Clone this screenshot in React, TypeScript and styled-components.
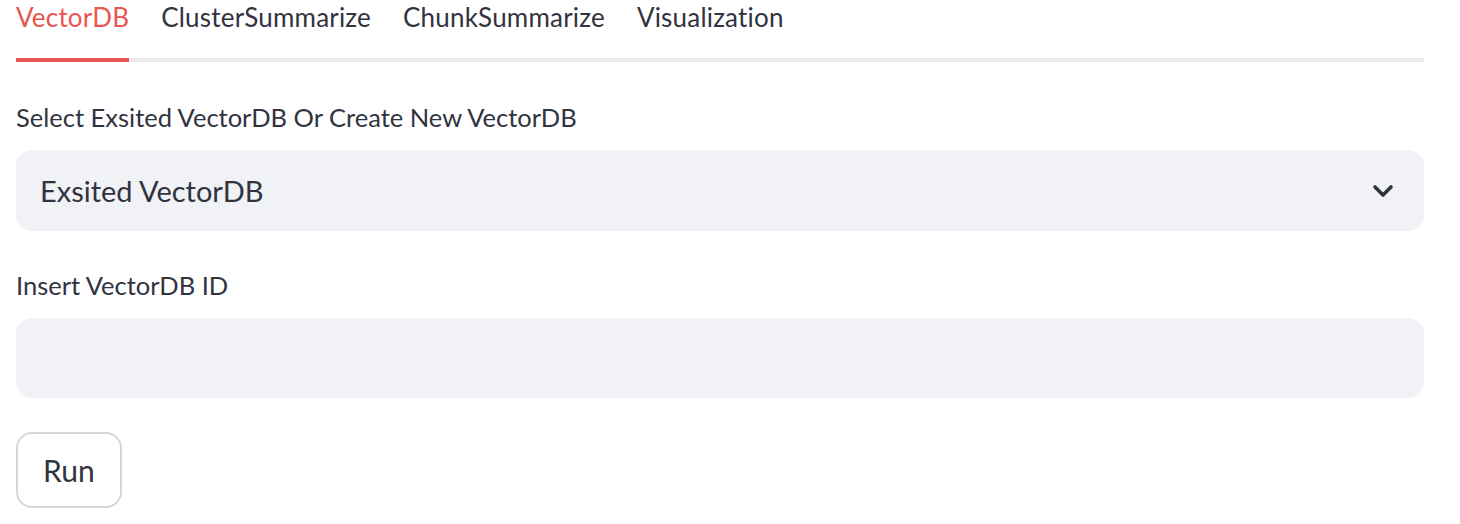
import styled, { createGlobalStyle } from 'styled-components';

const GlobalStyle = createGlobalStyle`
  body {
    margin: 0;
    background: #ffffff;
    font-family: Lato, "Noto Sans", sans-serif;
    color: #31333f;
  }
`;

const Page = styled.main`
  width: 1408px;
  padding: 0 16px;
  display: flex;
  flex-direction: column;
`;

const TabList = styled.nav`
  display: flex;
  gap: 32px;
  border-bottom: 4px solid #eaeaec;
`;

const Tab = styled.div<{ $active?: boolean }>`
  font-size: 26px;
  letter-spacing: 0.2px;
  line-height: 34px;
  padding-bottom: 24px;
  margin-bottom: -4px;
  color: ${(p) => (p.$active ? '#eb5550' : '#31333f')};
  border-bottom: 4px solid ${(p) => (p.$active ? '#eb5550' : 'transparent')};
  white-space: nowrap;
`;

const Form = styled.section`
  display: flex;
  flex-direction: column;
  gap: 34px;
  padding-top: 35px;
`;

const Field = styled.div`
  display: flex;
  flex-direction: column;
  gap: 13px;
`;

const Label = styled.label`
  font-size: 25.5px;
  line-height: 40px;
`;

const SelectBox = styled.div`
  height: 81px;
  border-radius: 16px;
  background: #f0f2f6;
  display: flex;
  align-items: center;
  justify-content: space-between;
  padding: 0 30px 0 24px;
  font-size: 29px;
`;

const TextInput = styled.input`
  height: 80px;
  border: none;
  outline: none;
  border-radius: 16px;
  background: #f0f2f6;
  padding: 0 24px;
  font-family: inherit;
  font-size: 29px;
  color: #31333f;
`;

const Button = styled.button`
  align-self: flex-start;
  height: 76px;
  padding: 0 25px;
  border: 2px solid #d6d6d9;
  border-radius: 16px;
  background: #ffffff;
  font-family: inherit;
  font-size: 30px;
  color: #31333f;
`;

const tabs = ['VectorDB', 'ClusterSummarize', 'ChunkSummarize', 'Visualization'];

function Chevron() {
  return (
    <svg width="22" height="14" viewBox="0 0 22 14">
      <polyline
        points="3,3 11,11 19,3"
        fill="none"
        stroke="#31333f"
        strokeWidth="3.6"
        strokeLinecap="round"
        strokeLinejoin="round"
      />
    </svg>
  );
}

export default function App() {
  return (
    <>
      <GlobalStyle />
      <Page>
        <TabList>
          {tabs.map((t, i) => (
            <Tab key={t} $active={i === 0}>
              {t}
            </Tab>
          ))}
        </TabList>
        <Form>
          <Field>
            <Label>Select Exsited VectorDB Or Create New VectorDB</Label>
            <SelectBox>
              <span>Exsited VectorDB</span>
              <Chevron />
            </SelectBox>
          </Field>
          <Field>
            <Label>Insert VectorDB ID</Label>
            <TextInput />
          </Field>
          <Button>Run</Button>
        </Form>
      </Page>
    </>
  );
}
